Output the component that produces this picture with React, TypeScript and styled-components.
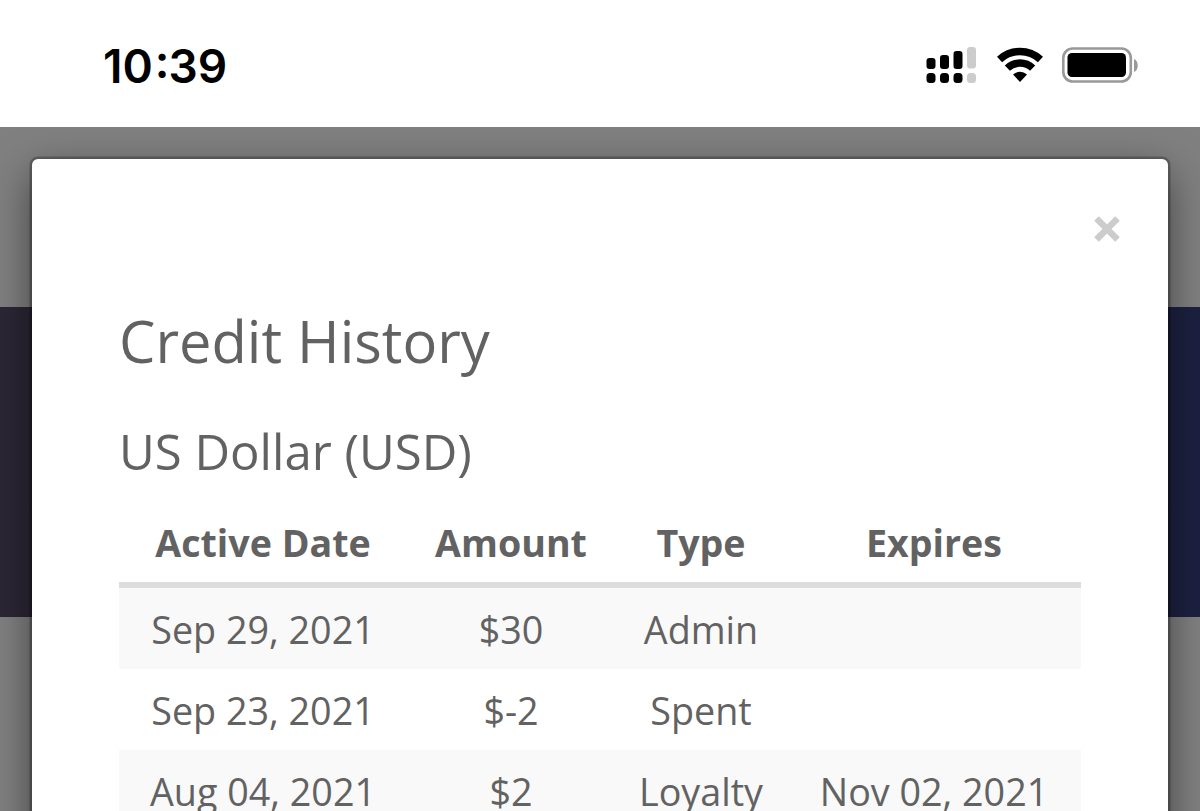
import React from 'react';
import styled, { createGlobalStyle } from 'styled-components';

interface CreditEntry {
  activeDate: string;
  amount: string;
  type: string;
  expires?: string;
}

const entries: CreditEntry[] = [
  { activeDate: 'Sep 29, 2021', amount: '$30', type: 'Admin' },
  { activeDate: 'Sep 23, 2021', amount: '$-2', type: 'Spent' },
  { activeDate: 'Aug 04, 2021', amount: '$2', type: 'Loyalty', expires: 'Nov 02, 2021' },
];

const SignalIcon: React.FC = () => (
  <svg width="51" height="36" viewBox="0 0 51 36">
    <g fill="#000">
      <rect x="0.500" y="11" width="9" height="11" rx="3" />
      <rect x="14" y="8" width="9" height="14" rx="3" />
      <rect x="27.500" y="4" width="9" height="18" rx="3" />
      <rect x="0.500" y="26" width="9" height="10" rx="3.500" />
      <rect x="14" y="26" width="9" height="10" rx="3.500" />
      <rect x="27.500" y="26" width="9" height="10" rx="3.500" />
    </g>
    <g fill="#ccc">
      <rect x="41" y="0" width="9" height="21.500" rx="3" />
      <rect x="41" y="26" width="9" height="10" rx="3.500" />
    </g>
  </svg>
);

const WifiIcon: React.FC = () => (
  <svg width="46" height="36" viewBox="0 0 46 36">
    <g fill="none" stroke="#000" strokeWidth="7.500">
      <path d="M2.560 12.500a30.200 30.200 0 0 1 40.880 0" />
      <path d="M10.350 21.150a18.400 18.400 0 0 1 25.300 0" />
    </g>
    <path d="M16 27.400a10.500 10.500 0 0 1 14 0L23 35z" />
  </svg>
);

const BatteryIcon: React.FC = () => (
  <svg width="77" height="36" viewBox="0 0 77 36">
    <rect x="1.300" y="1.500" width="67.500" height="33" rx="9.500" fill="none" stroke="#999" strokeWidth="2.600" />
    <rect x="5.500" y="6" width="58.500" height="24" rx="4.500" />
    <path d="M72 12c5 2 5 11 0 13z" fill="#999" />
  </svg>
);

const App: React.FC = () => (
  <>
    <GlobalStyle />
    <StyledScreen>
      <StyledStatusBar>
        <StyledClock>
          10<StyledColon>:</StyledColon>39
        </StyledClock>
        <StyledIndicators>
          <SignalIcon />
          <WifiIcon />
          <BatteryIcon />
        </StyledIndicators>
      </StyledStatusBar>
      <StyledBackdrop>
        <StyledModal>
          <StyledClose aria-label="Close">
            <svg width="26" height="26" viewBox="0 0 26 26">
              <path d="M2.500 2.500l21 21M23.500 2.500l-21 21" stroke="#ccc" strokeWidth="6.500" />
            </svg>
          </StyledClose>
          <StyledTitle>Credit History</StyledTitle>
          <StyledCurrency>US Dollar (USD)</StyledCurrency>
          <StyledTable>
            <colgroup>
              <col width="288" />
              <col width="208" />
              <col width="172" />
              <col width="294" />
            </colgroup>
            <thead>
              <tr>
                <StyledTh>Active Date</StyledTh>
                <StyledTh>Amount</StyledTh>
                <StyledTh>Type</StyledTh>
                <StyledTh>Expires</StyledTh>
              </tr>
            </thead>
            <tbody>
              {entries.map((entry) => (
                <StyledRow key={entry.activeDate}>
                  <StyledTd>{entry.activeDate}</StyledTd>
                  <StyledTd>{entry.amount}</StyledTd>
                  <StyledTd>{entry.type}</StyledTd>
                  <StyledTd>{entry.expires}</StyledTd>
                </StyledRow>
              ))}
            </tbody>
          </StyledTable>
        </StyledModal>
      </StyledBackdrop>
    </StyledScreen>
  </>
);

const GlobalStyle = createGlobalStyle`
  * {
    box-sizing: border-box;
  }

  body {
    margin: 0;
    overflow: hidden;
    color: #626262;
    font-family: 'Open Sans', sans-serif;
  }
`;

const StyledScreen = styled.div`
  display: flex;
  flex-direction: column;
  width: 1200px;
  height: 811px;
  overflow: hidden;
`;

const StyledStatusBar = styled.header`
  display: flex;
  flex: none;
  align-items: center;
  justify-content: space-between;
  height: 127px;
  padding: 4px 61px 0 103px;
  background: #fff;
`;

const StyledClock = styled.span`
  color: #000;
  font-family: Inter, sans-serif;
  font-size: 46px;
  font-weight: 600;
`;

const StyledColon = styled.span`
  margin: 0 -1px 0 2px;
  line-height: 1;
  vertical-align: 5px;
`;

const StyledIndicators = styled.div`
  display: flex;
  align-items: center;
  gap: 20px;
  margin-top: -1px;

  svg:last-child {
    margin-left: -1px;
  }
`;

const StyledBackdrop = styled.main`
  flex: 1;
  min-height: 0;
  padding: 32px 32px 0;
  overflow: hidden;
  background: linear-gradient(
      to bottom,
      #808080 180px,
      transparent 180px,
      transparent 490px,
      #808080 490px
    ),
    linear-gradient(to right, #2b2735, #1c2140);
`;

const StyledModal = styled.section`
  display: flex;
  flex-direction: column;
  height: 720px;
  padding: 57px 87px 0;
  border-radius: 6px;
  background: #fff;
  box-shadow: 0 0 0 2.5px rgba(0, 0, 0, 0.25), 0 14px 42px rgba(0, 0, 0, 0.5);
`;

const StyledClose = styled.button`
  display: flex;
  align-self: flex-end;
  margin-right: -39px;
  padding: 0;
  border: 0;
  background: none;
`;

const StyledTitle = styled.h1`
  margin: 59px 0 0;
  font-size: 57.8px;
  font-weight: 400;
  line-height: 80px;
`;

const StyledCurrency = styled.h2`
  margin: 37px 0 0;
  font-size: 49.1px;
  font-weight: 400;
  line-height: 66px;
`;

const StyledTable = styled.table`
  width: 962px;
  margin-top: 19px;
  border-collapse: separate;
  border-spacing: 0;
  table-layout: fixed;
  text-align: center;
`;

const StyledTh = styled.th`
  height: 85px;
  padding: 0;
  border-bottom: 6px solid #ddd;
  font-size: 37.6px;
  font-weight: 700;
  line-height: 52px;
`;

const StyledTd = styled.td`
  height: 81px;
  padding: 2px 0 0;
  font-size: 37.7px;
  line-height: 52px;
  white-space: nowrap;
`;

const StyledRow = styled.tr`
  &:nth-child(odd) {
    background: #f9f9f9;
  }
`;

export default App;
